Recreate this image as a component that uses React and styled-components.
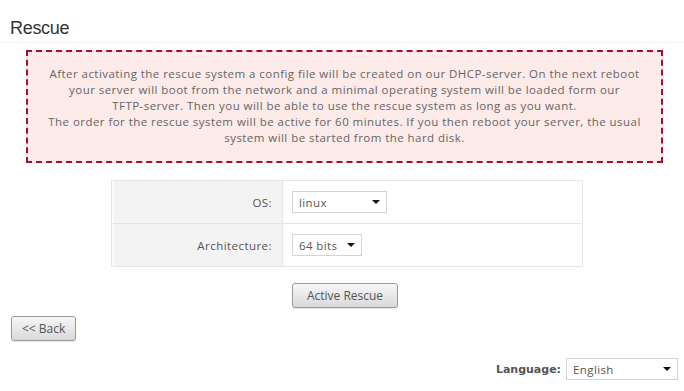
import styled, { createGlobalStyle } from "styled-components";

const GlobalStyle = createGlobalStyle`
  body {
    margin: 0;
    background: #fff;
    font-family: "Open Sans", "Liberation Sans", sans-serif;
    color: #666;
  }
`;

const Page = styled.div`
  width: 684px;
  height: 391px;
  overflow: hidden;
  display: flex;
  flex-direction: column;
`;

const Title = styled.h2`
  margin: 0;
  padding: 17px 10px 3px;
  font-family: "Liberation Sans", sans-serif;
  font-weight: normal;
  font-size: 18px;
  line-height: 22px;
  letter-spacing: -0.3px;
  color: #333;
  border-bottom: 1px solid #f4f4f4;
`;

const Notice = styled.div`
  margin: 7px 21px 0 26px;
  height: 113px;
  box-sizing: border-box;
  border: 2px dashed #a3102e;
  background: #fcebe8;
  display: flex;
  align-items: center;
  justify-content: center;
  text-align: center;
  font-size: 11.5px;
  letter-spacing: 0.45px;
  line-height: 16px;
  color: #666;
  padding: 0 4px 2px;
  white-space: nowrap;
`;

const Table = styled.div`
  margin: 17px auto 0 111px;
  width: 470px;
  border: 1px solid #e6e6e6;
  display: grid;
  grid-template-columns: 171px 1fr;
`;

const Label = styled.div`
  background: #f3f3f3;
  border-left: 2px solid #fafafa;
  border-right: 1px solid #e6e6e6;
  border-top: ${({ $first }) => ($first ? "none" : "1px solid #e3e3e3")};
  height: 42px;
  display: flex;
  align-items: center;
  justify-content: flex-end;
  padding-right: 10px;
  font-size: 11.5px;
  letter-spacing: 0.45px;
  color: #555;
`;

const Cell = styled.div`
  border-top: ${({ $first }) => ($first ? "none" : "1px solid #e3e3e3")};
  height: 42px;
  display: flex;
  align-items: center;
  padding-left: 9px;
`;

const Select = styled.div`
  width: ${({ $w }) => $w}px;
  height: 22px;
  box-sizing: border-box;
  border: 1px solid #d4d4d4;
  background: #fff;
  display: flex;
  align-items: center;
  justify-content: space-between;
  padding: 0 6px 0 6px;
  font-size: 11.5px;
  letter-spacing: 0.4px;
  color: #555;
`;

const Arrow = styled.span`
  width: 0;
  height: 0;
  border-left: 4px solid transparent;
  border-right: 4px solid transparent;
  border-top: 4px solid #111;
`;

const Center = styled.div`
  display: flex;
  justify-content: center;
  margin-top: 16px;
  padding-left: 6px;
`;

const Button = styled.button`
  height: 25px;
  padding: 0 ${({ $px }) => $px}px;
  border: 1px solid #9a9a9a;
  border-radius: 3px;
  background: linear-gradient(#f7f7f7, #d9d9d9);
  font-family: "Open Sans", "Liberation Sans", sans-serif;
  font-size: 12px;
  color: #555;
  box-shadow: 0 1px 1px rgba(0, 0, 0, 0.1);
`;

const BackRow = styled.div`
  padding: 8px 0 0 11px;
`;

const LangRow = styled.div`
  margin-top: 17px;
  display: flex;
  justify-content: flex-end;
  align-items: center;
  gap: 5px;
  padding-right: 6px;
`;

const LangLabel = styled.span`
  font-family: "DejaVu Sans", sans-serif;
  font-weight: bold;
  font-size: 11px;
  color: #555;
`;

const SelectField = ({ value, width }) => (
  <Select $w={width}>
    <span>{value}</span>
    <Arrow />
  </Select>
);

export default function App() {
  return (
    <Page>
      <GlobalStyle />
      <Title>Rescue</Title>
      <Notice>
        <div>
          After activating the rescue system a config file will be created on our DHCP-server. On the next reboot
          <br />
          your server will boot from the network and a minimal operating system will be loaded form our
          <br />
          TFTP-server. Then you will be able to use the rescue system as long as you want.
          <br />
          The order for the rescue system will be active for 60 minutes. If you then reboot your server, the usual
          <br />
          system will be started from the hard disk.
        </div>
      </Notice>
      <Table>
        <Label $first>OS:</Label>
        <Cell $first>
          <SelectField value="linux" width={95} />
        </Cell>
        <Label>Architecture:</Label>
        <Cell>
          <SelectField value="64 bits" width={70} />
        </Cell>
      </Table>
      <Center>
        <Button $px={14}>Active Rescue</Button>
      </Center>
      <BackRow>
        <Button $px={10}>&lt;&lt; Back</Button>
      </BackRow>
      <LangRow>
        <LangLabel>Language:</LangLabel>
        <SelectField value="English" width={112} />
      </LangRow>
    </Page>
  );
}
